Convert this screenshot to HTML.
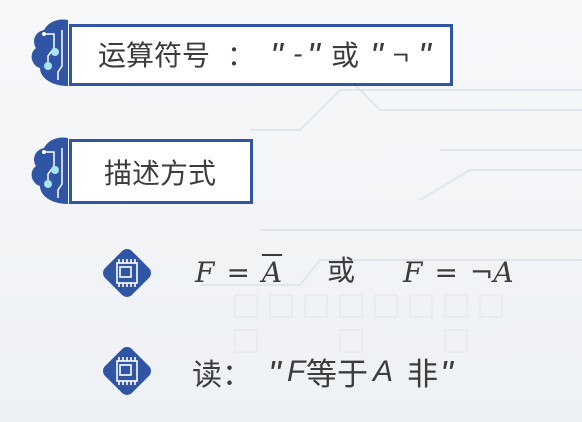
<!DOCTYPE html>
<html><head><meta charset="utf-8"><style>
body{margin:0;width:582px;height:422px;overflow:hidden;background:linear-gradient(180deg,#f7f8fa,#eef1f4);font-family:"Noto Sans CJK SC",sans-serif;color:#3c3c3c;position:relative}
.box{position:absolute;border:3px solid #2f55a4;background:#fff;box-sizing:border-box}
.t{position:absolute;font-size:28px;white-space:nowrap;line-height:40px}
.q{font-family:"Liberation Sans",sans-serif;font-style:italic}
.qq{font-family:"Liberation Sans",sans-serif;font-style:italic;font-size:36px}
.m{font-family:"DejaVu Serif","Liberation Serif",serif;font-style:italic;font-size:28px}
.m span{display:inline-block}
svg{position:absolute}
</style></head><body>
<svg width="582" height="422" style="left:0;top:0">
<g stroke="#dfe6ee" stroke-width="2" fill="none">
<path d="M230 60 L330 60 L380 110 L582 110"/><path d="M250 130 L300 130 L340 90 L582 90"/>
<path d="M260 230 L582 230"/><path d="M200 285 L300 285 L320 260 L582 260"/>
<path d="M440 150 L582 150"/><path d="M420 200 L470 170 L582 170"/>
</g>
<g stroke="#e6eaef" stroke-width="1.5" fill="none">
<rect x="235" y="295" width="22" height="22"/><rect x="270" y="295" width="22" height="22"/><rect x="305" y="295" width="22" height="22"/><rect x="340" y="295" width="22" height="22"/><rect x="375" y="295" width="22" height="22"/><rect x="410" y="295" width="22" height="22"/><rect x="445" y="295" width="22" height="22"/><rect x="480" y="295" width="22" height="22"/>
<rect x="235" y="330" width="22" height="22"/><rect x="340" y="330" width="22" height="22"/><rect x="445" y="330" width="22" height="22"/>
</g>
</svg>
<div class="box" style="left:69px;top:24px;width:384px;height:62px"></div>
<div class="box" style="left:69px;top:139px;width:184px;height:65px"></div>
<svg width="42" height="70" style="left:28px;top:18px" viewBox="0 0 42 70"><path d="M40 2 C30 0 20 4 16 12 C6 14 4 24 8 30 C0 36 4 48 12 50 C12 60 24 68 40 68 Z" fill="#2f55a4"/><g stroke="#fff" stroke-width="1.5" fill="none"><path d="M16 16 H26 V30 L20 38 V46"/><path d="M34 12 V48 L30 54 V62"/></g><circle cx="27" cy="34" r="4" fill="#a8e4f0"/><circle cx="20" cy="48" r="4" fill="#a8e4f0"/><circle cx="16" cy="16" r="2" fill="#fff"/></svg>
<svg width="42" height="70" style="left:28px;top:136px" viewBox="0 0 42 70"><path d="M40 2 C30 0 20 4 16 12 C6 14 4 24 8 30 C0 36 4 48 12 50 C12 60 24 68 40 68 Z" fill="#2f55a4"/><g stroke="#fff" stroke-width="1.5" fill="none"><path d="M16 16 H26 V30 L20 38 V46"/><path d="M34 12 V48 L30 54 V62"/></g><circle cx="27" cy="34" r="4" fill="#a8e4f0"/><circle cx="20" cy="48" r="4" fill="#a8e4f0"/><circle cx="16" cy="16" r="2" fill="#fff"/></svg>
<div class="t" style="left:98px;top:34px">运算符号</div>
<div class="t" style="left:227px;top:34px">：</div>
<div class="t qq" style="left:270px;top:36px">"</div>
<div class="t q" style="left:293px;top:34px">-</div>
<div class="t qq" style="left:307px;top:36px">"</div>
<div class="t" style="left:331px;top:34px">或</div>
<div class="t qq" style="left:370px;top:36px">"</div>
<div class="t" style="left:393px;top:34px">¬</div>
<div class="t qq" style="left:418px;top:36px">"</div>
<div class="t" style="left:104px;top:152px">描述方式</div>
<svg width="60" height="60" style="left:97px;top:243px" viewBox="0 0 60 60"><rect x="11" y="11" width="38" height="38" rx="7" transform="rotate(45 30 30)" fill="#2f55a4"/><g stroke="#fff" stroke-width="1.6" fill="none"><rect x="20" y="20" width="20" height="20"/><rect x="23" y="24" width="11" height="10"/><path d="M22 16v4M26 16v4M30 16v4M34 16v4M38 16v4M22 40v4M26 40v4M30 40v4M34 40v4M38 40v4"/></g></svg>
<svg width="60" height="60" style="left:97px;top:341px" viewBox="0 0 60 60"><rect x="11" y="11" width="38" height="38" rx="7" transform="rotate(45 30 30)" fill="#2f55a4"/><g stroke="#fff" stroke-width="1.6" fill="none"><rect x="20" y="20" width="20" height="20"/><rect x="23" y="24" width="11" height="10"/><path d="M22 16v4M26 16v4M30 16v4M34 16v4M38 16v4M22 40v4M26 40v4M30 40v4M34 40v4M38 40v4"/></g></svg>
<div class="t m" style="left:195px;top:253px">F<span style="font-style:normal;margin:0 12px">=</span><span style="text-decoration:overline">A</span></div>
<div class="t" style="left:327px;top:249px">或</div>
<div class="t m" style="left:403px;top:253px">F<span style="font-style:normal;margin:0 12px">=</span><span style="font-style:normal">¬</span>A</div>
<div class="t" style="left:192px;top:352px;font-size:30px">读</div>
<div class="t" style="left:222px;top:352px;font-size:30px">：</div>
<div class="t qq" style="left:268px;top:354px">"</div>
<div class="t q" style="left:287px;top:352px;font-size:30px">F</div>
<div class="t" style="left:306px;top:352px;font-size:31px">等于</div>
<div class="t q" style="left:373px;top:352px;font-size:30px">A</div>
<div class="t" style="left:407px;top:352px;font-size:31px">非</div>
<div class="t qq" style="left:440px;top:354px">"</div>
</body></html>
